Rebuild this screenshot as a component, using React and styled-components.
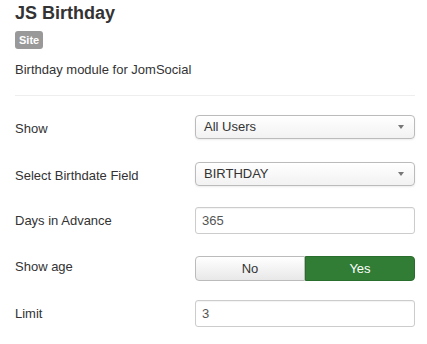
import React from "react";
import styled, { createGlobalStyle } from "styled-components";

const Global = createGlobalStyle`
  body {
    margin: 0;
    background: #fff;
    font-family: "Liberation Sans", Arial, sans-serif;
    color: #333;
  }
`;

const Page = styled.div`
  padding: 0 12px 0 15px;
`;

const Title = styled.h2`
  margin: 0;
  padding-top: 2px;
  font-size: 18px;
  line-height: 22px;
  font-weight: bold;
  color: #333;
`;

const Badge = styled.span`
  display: inline-block;
  margin-top: 7px;
  padding: 0 4px;
  height: 18px;
  line-height: 18px;
  font-size: 11px;
  font-weight: bold;
  color: #fff;
  background: #999;
  border-radius: 3px;
`;

const Desc = styled.p`
  margin: 12px 0 0;
  font-size: 13px;
  line-height: 18px;
`;

const Divider = styled.hr`
  margin: 16px 0 8px;
  border: 0;
  border-top: 1px solid #eee;
`;

const Row = styled.div`
  display: flex;
  align-items: center;
  height: ${(p) => p.$h || 46}px;
`;

const Label = styled.div`
  flex: 0 0 180px;
  font-size: 13px;
  line-height: 18px;
  padding-top: ${(p) => p.$offset || 0}px;
`;

const Select = styled.div`
  position: relative;
  flex: 0 0 220px;
  height: 24px;
  box-sizing: border-box;
  border: 1px solid #bbb;
  border-radius: 4px;
  background: linear-gradient(#fff, #f2f2f2);
  box-shadow: 0 1px 2px rgba(0, 0, 0, 0.08);
  font-size: 13px;
  line-height: 22px;
  padding-left: 8px;
  color: #333;
  &::after {
    content: "";
    position: absolute;
    right: 10px;
    top: 9px;
    border-left: 3.5px solid transparent;
    border-right: 3.5px solid transparent;
    border-top: 4px solid #777;
  }
`;

const Input = styled.div`
  flex: 0 0 220px;
  height: 27px;
  box-sizing: border-box;
  border: 1px solid #ccc;
  border-radius: 3px;
  background: #fff;
  box-shadow: inset 0 1px 1px rgba(0, 0, 0, 0.05);
  font-size: 13px;
  line-height: 25px;
  padding-left: 6px;
  color: #555;
`;

const Toggle = styled.div`
  display: flex;
  flex: 0 0 220px;
  height: 25px;
  margin-top: ${(p) => p.$shift || 0}px;
`;

const ToggleBtn = styled.div`
  flex: 1;
  box-sizing: border-box;
  font-size: 13px;
  line-height: 23px;
  text-align: center;
  border: 1px solid ${(p) => (p.$active ? "#2a6e2e" : "#bbb")};
  border-radius: ${(p) => (p.$left ? "4px 0 0 4px" : "0 4px 4px 0")};
  background: ${(p) =>
    p.$active ? "#317d35" : "linear-gradient(#fff, #e8e8e8)"};
  color: ${(p) => (p.$active ? "#fff" : "#333")};
`;

export default function App() {
  return (
    <Page>
      <Global />
      <Title>JS Birthday</Title>
      <Badge>Site</Badge>
      <Desc>Birthday module for JomSocial</Desc>
      <Divider />
      <Row>
        <Label $offset={3}>Show</Label>
        <Select>All Users</Select>
      </Row>
      <Row $h={47}>
        <Label $offset={4}>Select Birthdate Field</Label>
        <Select>BIRTHDAY</Select>
      </Row>
      <Row>
        <Label $offset={2}>Days in Advance</Label>
        <Input>365</Input>
      </Row>
      <Row $h={47}>
        <Label $offset={0}>Show age</Label>
        <Toggle $shift={3}>
          <ToggleBtn $left>No</ToggleBtn>
          <ToggleBtn $active>Yes</ToggleBtn>
        </Toggle>
      </Row>
      <Row>
        <Label $offset={2}>Limit</Label>
        <Input>3</Input>
      </Row>
    </Page>
  );
}
